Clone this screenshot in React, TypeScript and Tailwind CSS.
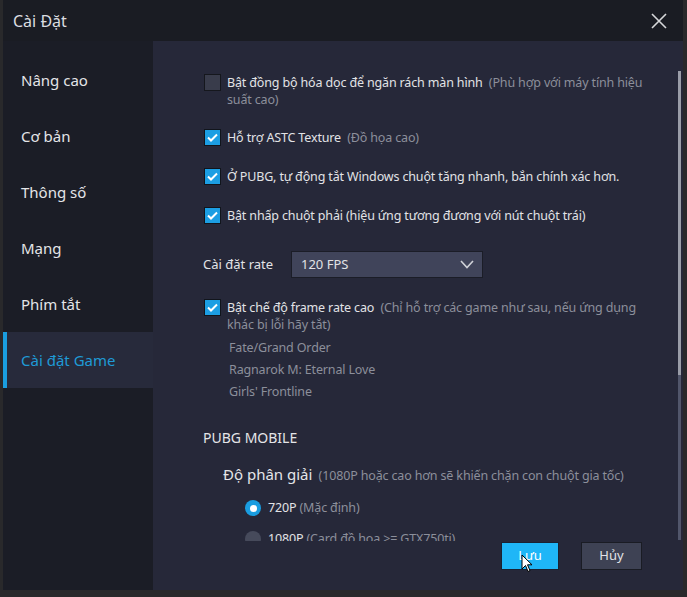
import React from 'react';

const font = { fontFamily: '"Noto Sans", "Open Sans", sans-serif' };

const Check: React.FC<{ checked?: boolean }> = ({ checked }) =>
  checked ? (
    <div className="w-[17px] h-[17px] shrink-0 bg-[#1c9ee3] border border-[#11151c] flex items-center justify-center">
      <svg width="11" height="9" viewBox="0 0 11 9" fill="none">
        <path d="M1 4.5L4 7.5L10 1.5" stroke="white" strokeWidth="2" />
      </svg>
    </div>
  ) : (
    <div className="w-[17px] h-[17px] shrink-0 bg-[#393c4b] border border-[#15171d]" />
  );

const navItems = ['Nâng cao', 'Cơ bản', 'Thông số', 'Mạng', 'Phím tắt'];

export default function App() {
  return (
    <div
      className="w-[687px] h-[597px] bg-[#29292b] pl-[3px] pr-[4px] pb-[7px] flex flex-col overflow-hidden"
      style={font}
    >
      {/* title bar */}
      <div className="h-[41px] shrink-0 bg-[#1a1c23] flex items-center justify-between pl-[10px] pr-[16px]">
        <span className="text-[16px] text-[#dcdde0]">Cài Đặt</span>
        <svg width="16" height="16" viewBox="0 0 16 16">
          <path d="M1 1L15 15M15 1L1 15" stroke="#d6d7da" strokeWidth="1.6" />
        </svg>
      </div>

      <div className="flex flex-1 min-h-0">
        {/* sidebar */}
        <div className="w-[150px] shrink-0 bg-[#1b1d26] flex flex-col pt-[11px]">
          {navItems.map((n) => (
            <div key={n} className="h-[56px] flex items-center pl-[18px] text-[15px] text-[#e4e5e8]">
              {n}
            </div>
          ))}
          <div className="h-[56px] flex items-center bg-[#272a3b] text-[15px] text-[#1f9ad6]">
            <div className="w-[4px] h-full bg-[#1a9ee0]" />
            <span className="pl-[14px]">Cài đặt Game</span>
          </div>
        </div>

        {/* content */}
        <div className="flex-1 bg-[#262839] flex flex-col relative">
          <div className="h-[500px] overflow-hidden pl-[51px] pr-[28px] pt-[33px] text-[12.5px] tracking-[-0.15px] text-[#e2e3e6]">
            <div className="flex gap-[6px] leading-[17px]">
              <Check />
              <div>
                Bật đồng bộ hóa dọc để ngăn rách màn hình{' '}
                <span className="text-[#8c8f9b]">&nbsp;(Phù hợp với máy tính hiệu suất cao)</span>
              </div>
            </div>
            <div className="flex gap-[6px] leading-[17px] mt-[21px]">
              <Check checked />
              <div>
                Hỗ trợ ASTC Texture <span className="text-[#8c8f9b]">&nbsp;(Đồ họa cao)</span>
              </div>
            </div>
            <div className="flex gap-[6px] leading-[17px] mt-[22px]">
              <Check checked />
              <div>Ở PUBG, tự động tắt Windows chuột tăng nhanh, bắn chính xác hơn.</div>
            </div>
            <div className="flex gap-[6px] leading-[17px] mt-[22px]">
              <Check checked />
              <div>Bật nhấp chuột phải (hiệu ứng tương đương với nút chuột trái)</div>
            </div>

            <div className="flex items-center mt-[27px] -ml-[1px] text-[13px] tracking-normal">
              <span className="w-[88px]">Cài đặt rate</span>
              <div className="w-[192px] h-[27px] bg-[#40445a] border border-[#1b1d27] flex items-center justify-between pl-[9px] pr-[8px]">
                <span>120 FPS</span>
                <svg width="14" height="9" viewBox="0 0 14 9" fill="none">
                  <path d="M1 1L7 7.5L13 1" stroke="#d0d2d8" strokeWidth="1.6" />
                </svg>
              </div>
            </div>

            <div className="flex gap-[6px] leading-[17px] mt-[21px]">
              <Check checked />
              <div>
                Bật chế độ frame rate cao{' '}
                <span className="text-[#8c8f9b]">&nbsp;(Chỉ hỗ trợ các game như sau, nếu ứng dụng khác bị lỗi hãy tắt)</span>
              </div>
            </div>
            <div className="pl-[25px] mt-[4px] text-[#8c8f9b] leading-[22px]">
              <div>Fate/Grand Order</div>
              <div>Ragnarok M: Eternal Love</div>
              <div>Girls' Frontline</div>
            </div>

            <div className="mt-[25px] -ml-[1px] text-[14px] tracking-normal leading-[20px] text-[#e4e5e8]">PUBG MOBILE</div>
            <div className="mt-[16px] ml-[19px] leading-[20px]">
              <span className="text-[15px] tracking-normal text-[#e4e5e8]">Độ phân giải</span>
              <span className="text-[#8c8f9b]">&nbsp;&nbsp;(1080P hoặc cao hơn sẽ khiến chặn con chuột gia tốc)</span>
            </div>
            <div className="mt-[12px] ml-[41px] flex items-center gap-[7px] leading-[20px]">
              <div className="w-[16px] h-[16px] rounded-full bg-[#1a9de0] flex items-center justify-center">
                <div className="w-[7px] h-[7px] rounded-full bg-white" />
              </div>
              <span>
                720P <span className="text-[#8c8f9b]">(Mặc định)</span>
              </span>
            </div>
            <div className="mt-[11px] ml-[41px] flex items-center gap-[7px] leading-[20px]">
              <div className="w-[16px] h-[16px] rounded-full bg-[#464a5b]" />
              <span>
                1080P <span className="text-[#8c8f9b]">(Card đồ họa &gt;= GTX750ti)</span>
              </span>
            </div>
          </div>

          {/* scrollbar */}
          <div className="absolute right-[2px] top-[30px] w-[3px] h-[469px] bg-[#51566b]">
            <div className="w-full h-[304px] bg-[#9a9da8]" />
          </div>

          {/* footer */}
          <div className="flex-1 flex justify-end items-start gap-[22px] pr-[41px] pt-[1px] text-[13px]">
            <div className="relative w-[58px] h-[28px] bg-[#1fb6f7] border border-[#1a2233] flex items-center justify-center text-white">
              Lưu
              <svg className="absolute left-[19px] top-[11px]" width="12" height="19" viewBox="0 0 12 19">
                <path d="M1 1V15L4.5 11.5L7 17.5L9 16.5L6.5 10.8H11Z" fill="white" stroke="black" strokeWidth="1" />
              </svg>
            </div>
            <div className="w-[61px] h-[28px] bg-[#3e4254] border border-[#1a1c24] flex items-center justify-center text-[#e2e3e6]">
              Hủy
            </div>
          </div>
        </div>
      </div>
    </div>
  );
}
